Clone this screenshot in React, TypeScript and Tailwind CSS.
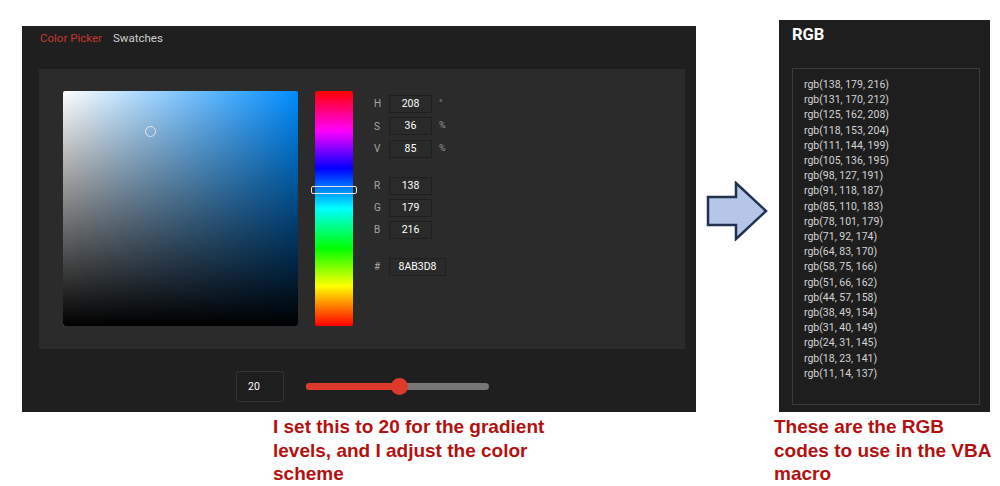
import React from "react";

const levels = [
  "rgb(138, 179, 216)",
  "rgb(131, 170, 212)",
  "rgb(125, 162, 208)",
  "rgb(118, 153, 204)",
  "rgb(111, 144, 199)",
  "rgb(105, 136, 195)",
  "rgb(98, 127, 191)",
  "rgb(91, 118, 187)",
  "rgb(85, 110, 183)",
  "rgb(78, 101, 179)",
  "rgb(71, 92, 174)",
  "rgb(64, 83, 170)",
  "rgb(58, 75, 166)",
  "rgb(51, 66, 162)",
  "rgb(44, 57, 158)",
  "rgb(38, 49, 154)",
  "rgb(31, 40, 149)",
  "rgb(24, 31, 145)",
  "rgb(18, 23, 141)",
  "rgb(11, 14, 137)",
];

const Field = ({
  label,
  value,
  unit,
  wide,
}: {
  label: string;
  value: string;
  unit?: string;
  wide?: boolean;
}) => (
  <div className="flex items-center h-[17px]">
    <span className="w-[15px] text-[10px] text-[#a8a8a8]">{label}</span>
    <div
      className={`${
        wide ? "w-[57px]" : "w-[43px]"
      } h-[18px] flex items-center justify-center border border-[#1f1f1f] bg-[#2a2a2a] text-[10.5px] text-white`}
    >
      {value}
    </div>
    {unit && (
      <span className="ml-[7px] text-[9px] text-[#9a9a9a]">{unit}</span>
    )}
  </div>
);

const Picker = () => (
  <div className="w-[674px] h-[386px] bg-[#1f1f20] flex flex-col">
    <div className="flex gap-[11px] pl-[18px] pt-[4px] h-[43px] text-[11.5px]">
      <span className="text-[#c8372b]">Color Picker</span>
      <span className="text-[#cfcfcf]">Swatches</span>
    </div>
    <div className="ml-[17px] w-[646px] h-[280px] bg-[#2b2b2b] flex pl-[24px] pt-[22px]">
      {/* saturation / value square */}
      <div className="relative w-[235px] h-[235px] rounded-[2px] bg-[linear-gradient(to_right,#ffffff,#008cff)]">
        <div className="absolute inset-0 rounded-[2px] bg-[linear-gradient(to_bottom,rgba(0,0,0,0),#000000)]" />
        <div className="absolute left-[82px] top-[35px] w-[11px] h-[11px] rounded-full border border-[#e6e6e6]" />
      </div>
      {/* hue strip */}
      <div className="relative ml-[17px] w-[38px] h-[235px] rounded-[2px] bg-[linear-gradient(to_bottom,#ff0000_0%,#ff00ff_17%,#0000ff_33%,#00ffff_50%,#00ff00_67%,#ffff00_83%,#ff0000_100%)]">
        <div className="absolute left-[-4px] top-[95px] w-[46px] h-[8px] rounded-[2px] border border-[#e8e8e8]" />
      </div>
      <div className="ml-[21px] mt-[4px] flex flex-col">
        <div className="flex flex-col gap-[5.5px]">
          <Field label="H" value="208" unit="°" />
          <Field label="S" value="36" unit="%" />
          <Field label="V" value="85" unit="%" />
        </div>
        <div className="flex flex-col gap-[5px] mt-[20px]">
          <Field label="R" value="138" />
          <Field label="G" value="179" />
          <Field label="B" value="216" />
        </div>
        <div className="mt-[20px]">
          <Field label="#" value="8AB3D8" wide />
        </div>
      </div>
    </div>
    <div className="flex items-center mt-[22px] ml-[214px]">
      <div className="w-[48px] h-[31px] border border-[#333333] rounded-[2px] bg-[#1e1e1e] flex items-center pl-[11px] text-[10.5px] text-white">
        20
      </div>
      {/* level slider */}
      <div className="relative ml-[22px] w-[183px] h-[7px] rounded-full bg-[#777777]">
        <div className="absolute left-0 top-0 h-[7px] w-[93px] rounded-full bg-[#dd3a2c]" />
        <div className="absolute left-[85px] top-[-5px] w-[17px] h-[17px] rounded-full bg-[#dd3a2c]" />
      </div>
    </div>
  </div>
);

const Arrow = () => (
  <svg width="63" height="60" viewBox="0 0 63 60" className="ml-[10px] mt-[181px]">
    <path
      d="M2 16 H30 V2 L60 30 L30 58 V44 H2 Z"
      fill="#b4c7e7"
      stroke="#1f3350"
      strokeWidth="2.5"
      strokeLinejoin="miter"
    />
  </svg>
);

const RgbList = () => (
  <div className="w-[211px] h-[392px] bg-[#1e1e1f] flex flex-col pl-[13px] pt-[3px]">
    <span className="text-[16.5px] font-bold text-white leading-[24px]">RGB</span>
    <div className="mt-[21px] w-[188px] h-[337px] border border-[#3a3a3a] pl-[11px] pt-[8px]">
      {levels.map((c) => (
        <div key={c} className="text-[10.5px] leading-[15.2px] text-[#d4d4d4]">
          {c}
        </div>
      ))}
    </div>
  </div>
);

const App = () => {
  return (
    <div className="w-[1000px] h-[486px] bg-white flex items-start font-['Roboto',sans-serif] overflow-hidden">
      <div className="ml-[22px] mt-[26px] flex flex-col">
        <Picker />
        <p className="ml-[251px] mt-[3px] w-[290px] font-['Liberation_Sans',Arial,sans-serif] font-bold text-[19px] leading-[23.5px] text-[#b3100f]">
          I set this to 20 for the gradient levels, and I adjust the color
          scheme
        </p>
      </div>
      <div className="w-[83px]">
        <Arrow />
      </div>
      <div className="mt-[20px] flex flex-col">
        <RgbList />
        <p className="ml-[-5px] mt-[3px] w-[218px] font-['Liberation_Sans',Arial,sans-serif] font-bold text-[19px] leading-[23.5px] text-[#b3100f]">
          These are the RGB codes to use in the VBA macro
        </p>
      </div>
    </div>
  );
};

export default App;
